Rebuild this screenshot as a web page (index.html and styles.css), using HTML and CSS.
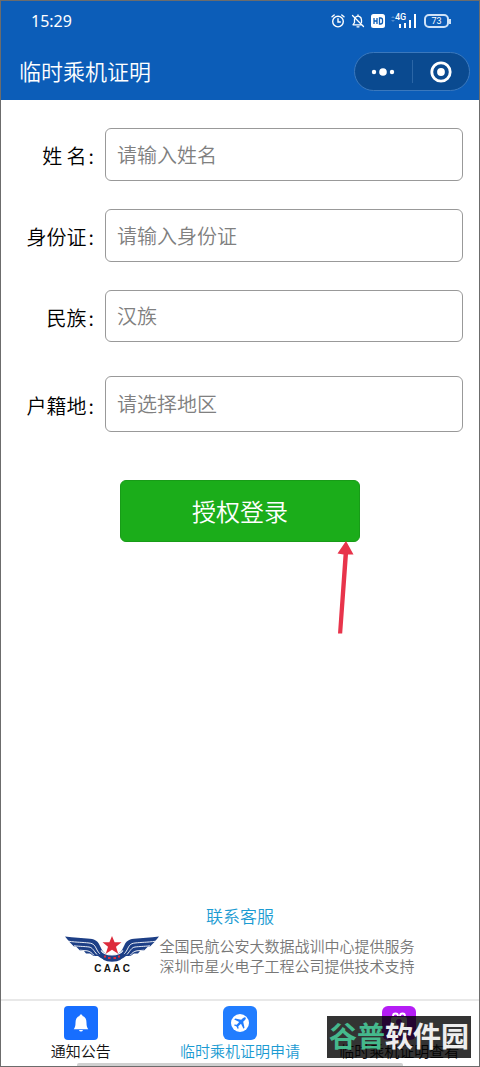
FILE: index.html
```html
<!DOCTYPE html>
<html lang="zh-CN">
<head>
<meta charset="utf-8">
<meta name="viewport" content="width=device-width, initial-scale=1">
<title>临时乘机证明</title>
<link rel="stylesheet" href="styles.css">
</head>
<body>
<div class="app">
  <header class="header">
    <div class="status">
      <span class="time">15:29</span>
      <div class="status-icons">
        <svg width="14" height="14" viewBox="0 0 14 14" fill="none" stroke="#fff" stroke-width="1.4" stroke-linecap="round" aria-hidden="true"><circle cx="7" cy="7.6" r="5.3"/><path d="M1 2.8 3.2 1M13 2.8 10.800 1M7 4.800V8h2.300"/></svg>
        <svg width="14" height="14" viewBox="0 0 14 14" fill="none" stroke="#fff" stroke-width="1.300" stroke-linecap="round" stroke-linejoin="round" aria-hidden="true"><path d="M4.800 3C7.500 1 10.500 3 10.500 6v2.500M3.500 5v3.500L2 10.800h8M7 .8v1M6 12.800h2M1.500 1.500l11 11"/></svg>
        <svg width="14" height="14" viewBox="0 0 14 14" aria-hidden="true"><rect width="14" height="14" rx="2.500" fill="#fff"/><path d="M3 4v6M6 4v6M3 7h3M8.500 4v6h1q2 0 2-2V6q0-2-2-2z" fill="none" stroke="#0c5db8" stroke-width="1.300"/></svg>
        <span class="signal">
          <span class="network">4G</span>
          <svg width="26" height="14" viewBox="0 0 26 14" fill="#fff" aria-hidden="true"><path d="M8 10h2v4H8zM13 9h2v5h-2zM18 6h2v8h-2zM23 0h2v14h-2z"/><path d="m0 4 2-2 2 2zM0 6h4L2 8z" opacity=".3"/></svg>
        </span>
        <span class="battery">73</span>
      </div>
    </div>
    <div class="nav">
      <h1 class="title">临时乘机证明</h1>
      <div class="capsule">
        <button class="capsule-btn" type="button" aria-label="更多"><svg width="24" height="10" viewBox="0 0 24 10" fill="#fff"><circle cx="3" cy="5" r="2.200"/><circle cx="12" cy="5" r="3.800"/><circle cx="21" cy="5" r="2.200"/></svg></button>
        <button class="capsule-btn" type="button" aria-label="关闭"><svg width="22" height="22" viewBox="0 0 22 22"><circle cx="11" cy="11" r="9.200" fill="none" stroke="#fff" stroke-width="2.800"/><circle cx="11" cy="11" r="3.900" fill="#fff"/></svg></button>
      </div>
    </div>
  </header>

  <main class="main">
    <form class="form">
      <div class="field"><label class="label" for="name">姓 名<span class="colon">:</span></label><input class="control" id="name" type="text" placeholder="请输入姓名"></div>
      <div class="field"><label class="label" for="idcard">身份证<span class="colon">:</span></label><input class="control" id="idcard" type="text" placeholder="请输入身份证"></div>
      <div class="field"><label class="label" for="nation">民族<span class="colon">:</span></label><input class="control control-nation" id="nation" type="text" placeholder="汉族"></div>
      <div class="field field-region"><label class="label" for="region">户籍地<span class="colon">:</span></label><select class="control control-region" id="region"><option>请选择地区</option></select></div>
      <div class="submit-wrap">
        <button class="submit" type="button">授权登录</button>
        <svg class="arrow" width="18" height="94" viewBox="0 0 18 94" fill="#e8344b" aria-hidden="true"><path d="M10 0 17.500 13.500H12L6.200 92.500H2L7.500 13.500 1.500 12.500z"/></svg>
      </div>
    </form>

    <footer class="support">
      <a class="contact" href="#contact">联系客服</a>
      <div class="credit">
        <svg class="logo" width="94" height="40" viewBox="0 0 94 40" role="img" aria-label="CAAC">
          <g id="wing">
            <path d="M0 .5c9 1.500 17 1.300 25 2.300 6 .700 8 3 9.500 6.200L37 14q3 5 10 5v5.500q-9 0-14-4.500h-4.500L25 17.500h-4L19 15h-3.500L11 10.500H9L4.500 6z" fill="#1d3f86"/>
            <path d="M3 5.200c10 1.300 14 1 21 1.800 5 .500 6 3 7.500 6s3 5 5.500 6.500M9 9.800c7 .700 10 .600 15 1.200 3.500 .500 4.500 3.500 8 7.500M15 14.200l7 .6c3 .400 5 2.200 7 4.700" fill="none" stroke="#fff" stroke-width=".9"/>
          </g>
          <use href="#wing" transform="matrix(-1 0 0 1 94 0)"/>
          <path d="M34.500 17q12.500 6 25 0-1.500 8.700-12.500 8.700T34.500 17z" fill="#1d3f86"/>
          <path d="M36 14.500q3 4.500 11 4.500t11-4.500" fill="none" stroke="#fff" stroke-width="1.100"/>
          <path d="m47 0 2.600 6.300H56.500L51 10.700l2.200 7L47 13.800l-6.200 3.900 2.200-7-5.500-4.400h6.900z" fill="#dd2c3c"/>
          <path d="M39 20.500h2M43 22h2.500M48.500 22H51M53 20.500h2" stroke="#dd2c3c" stroke-width="2"/>
          <text class="logo-text" x="47" y="36" text-anchor="middle">C A A C</text>
        </svg>
        <p class="credit-text">全国民航公安大数据战训中心提供服务<br>深圳市星火电子工程公司提供技术支持</p>
      </div>
    </footer>
  </main>

  <nav class="tabs">
    <a class="tab" href="#notice">
      <svg width="34" height="34" viewBox="0 0 34 34" aria-hidden="true"><rect width="34" height="34" rx="4" fill="#176eff"/><path d="M17 8.500c1 0 1.500.7 1.500 1.500 3 1 4 3.500 4 7 0 3 .5 4.500 1.800 6.300H9.700c1.300-1.800 1.800-3.300 1.800-6.300 0-3.500 1-6 4-7 0-.8.500-1.500 1.500-1.500zM15 24h4q-.5 1.500-2 1.500T15 24z" fill="#fff"/></svg>
      <span>通知公告</span>
    </a>
    <a class="tab tab-active" href="#apply">
      <svg width="34" height="34" viewBox="0 0 34 34" aria-hidden="true"><rect width="34" height="34" rx="6" fill="#217dff"/><circle cx="17" cy="17" r="9" fill="#fff"/><path d="M22.500 11.500c-1-.8-2 0-3 1l-1.300 1.300-6-1.300-1 1 5 2.500-2.500 2.700-2-.3-.8.8 2.600 1.300 1.300 2.600.8-.8-.3-2 2.700-2.500 2.500 5 1-1-1.300-6 1.300-1.300c1-1 1.800-2 1-3z" fill="#217dff"/></svg>
      <span>临时乘机证明申请</span>
    </a>
    <a class="tab" href="#view">
      <svg width="34" height="34" viewBox="0 0 34 34" aria-hidden="true"><rect width="34" height="34" rx="6" fill="#b51df5"/><path d="M11 10q0-2.500 2.500-2.500T16 10M18 10q0-2.500 2.500-2.500T23 10" stroke="#fff" stroke-width="1.800" fill="none"/><rect x="9" y="11" width="16" height="16" rx="2" fill="#fff"/><circle cx="17" cy="16" r="3" fill="#b51df5"/><path d="M11 25q0-6 6-6t6 6z" fill="#b51df5"/></svg>
      <span>临时乘机证明查看</span>
    </a>
    <div class="watermark"><span class="watermark-green">谷普</span>软件园</div>
  </nav>
  <div class="home-bar"></div>
</div>
</body>
</html>
```
FILE: styles.css
```css
* { box-sizing: border-box; }

body {
  margin: 0;
  background: #fff;
  color: #111;
  font-family: "Noto Sans CJK SC", sans-serif;
  font-weight: 350;
}

.app {
  display: flex;
  flex-direction: column;
  min-height: 100vh;
  border: 1px solid #6c6c6c;
}

.header {
  background: #0c5db8;
  color: #fff;
}

.status {
  display: flex;
  align-items: center;
  justify-content: space-between;
  height: 40px;
  padding: 0 30px;
}

.time {
  font: 400 16px/20px "Noto Sans", sans-serif;
}

.status-icons {
  display: flex;
  align-items: center;
  gap: 6px;
}

.signal {
  position: relative;
  display: flex;
  margin-right: 1px;
}

.network {
  position: absolute;
  left: 4px;
  top: -2px;
  padding-right: 1px;
  background: #0c5db8;
  font: 500 9px/10px Roboto, sans-serif;
}

.battery {
  position: relative;
  width: 25px;
  border: 2px solid #cfe2f7;
  border-radius: 5px;
  font: 400 9px/10px Roboto, sans-serif;
  text-align: center;
}

.battery::after {
  content: "";
  position: absolute;
  top: 3px;
  right: -4px;
  width: 2px;
  height: 5px;
  background: #cfe2f7;
}

.nav {
  display: flex;
  align-items: flex-start;
  justify-content: space-between;
  height: 59px;
  padding: 11px 9px 0 18px;
}

.title {
  margin: 0;
  padding-top: 2px;
  font-size: 22px;
  font-weight: 350;
  line-height: 32px;
}

.capsule {
  display: flex;
  width: 116px;
  height: 39px;
  border: 1px solid #3a78bd;
  border-radius: 20px;
  background: #0a4a90;
}

.capsule-btn {
  display: flex;
  flex: 1;
  align-items: center;
  justify-content: center;
  margin: 7px 0;
  padding: 0;
  border: 0;
  background: none;
}

.capsule-btn + .capsule-btn { border-left: 1px solid #2b66a6; }

.main {
  display: flex;
  flex: 1;
  flex-direction: column;
  justify-content: space-between;
}

.form {
  display: flex;
  flex-direction: column;
  gap: 28px;
  padding: 28px 16px 0 12px;
}

.field {
  display: flex;
  align-items: center;
}

.field-region { margin-top: 6px; }

.label {
  width: 92px;
  padding: 3px 11px 0 0;
  color: #000;
  font-size: 20px;
  line-height: 28px;
  text-align: right;
  white-space: nowrap;
}

.colon { padding-left: 2px; }

.control {
  flex: 1;
  min-width: 0;
  height: 53px;
  padding: 0 11px 1px;
  border: 1px solid #999;
  border-radius: 6px;
  background: #fff;
  color: #808080;
  font: inherit;
  font-size: 20px;
  appearance: none;
}

.control::placeholder { color: #808080; opacity: 1; }

.control-nation { height: 52px; }

.control-region { height: 56px; }

.submit-wrap {
  position: relative;
  align-self: center;
  width: 240px;
  margin: 20px 0 0 4px;
}

.submit {
  display: block;
  width: 100%;
  height: 62px;
  padding: 0 0 2px;
  border: 1px solid #189c18;
  border-radius: 6px;
  background: #1bad1a;
  color: #fff;
  font: inherit;
  font-size: 24px;
}

.arrow {
  position: absolute;
  top: 61px;
  right: 6px;
}

.support {
  display: flex;
  flex-direction: column;
  align-items: center;
  padding-bottom: 23px;
}

.contact {
  color: #1b9bd2;
  font-size: 17px;
  line-height: 24px;
  text-decoration: none;
}

.credit {
  display: flex;
  align-items: center;
  padding-top: 8px;
}

.logo-text {
  fill: #111;
  font: bold 10px "Liberation Sans", sans-serif;
}

.credit-text {
  margin: 0;
  color: #777;
  font-size: 15px;
  line-height: 20px;
  white-space: nowrap;
}

.tabs {
  position: relative;
  display: grid;
  grid-template-columns: repeat(3, 1fr);
  padding-bottom: 2px;
  border-top: 2px solid #e8e8e8;
}

.tab {
  display: flex;
  flex-direction: column;
  align-items: center;
  padding-top: 5px;
  color: #111;
  font-size: 15px;
  line-height: 21px;
  text-decoration: none;
  white-space: nowrap;
}

.tab-active { color: #1b9bd2; }

.watermark {
  position: absolute;
  top: 15px;
  right: 8px;
  width: 144px;
  padding-bottom: 4px;
  background: rgba(0, 0, 0, 0.8);
  color: #eee;
  font-size: 28px;
  font-weight: 700;
  line-height: 38px;
  text-align: center;
  white-space: nowrap;
}

.watermark-green { color: #45b98d; }

.home-bar {
  align-self: center;
  width: 68%;
  height: 3px;
  border-radius: 2px 2px 0 0;
  background: #d0d0d0;
}
```
